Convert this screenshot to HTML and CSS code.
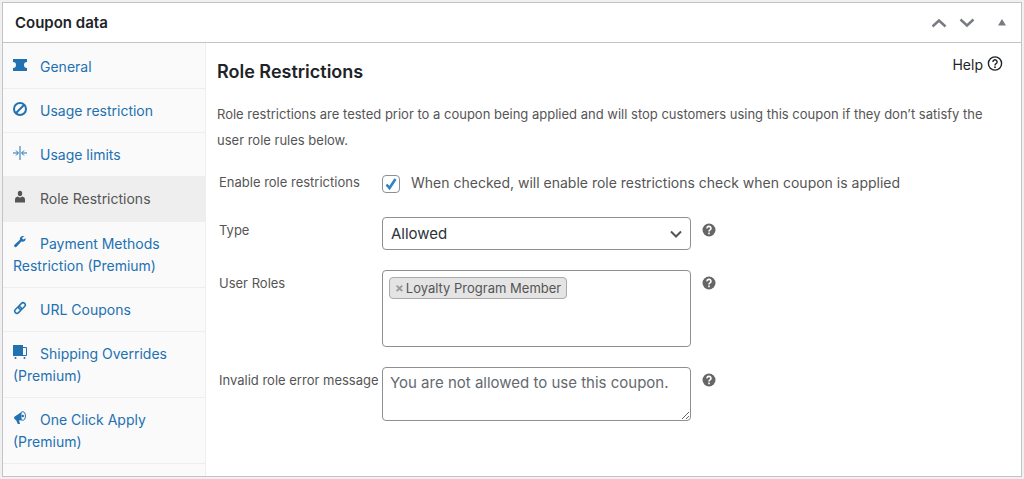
FILE: index.html
```html
<!DOCTYPE html>
<html lang="en">
<head>
    <meta charset="UTF-8">
    <title>Coupon data</title>
    <link rel="stylesheet" href="styles.css">
</head>
<body>
    <div class="postbox">
        <div class="postbox-header">
            <h2>Coupon data</h2>
            <div class="handle-actions">
                <button type="button" aria-label="Move up">
                    <svg width="16" height="16" viewBox="0 0 16 16"><path d="M1.500 11.500l6.500-6 6.500 6" fill="none" stroke="#787c82" stroke-width="2.400"/></svg>
                </button>
                <button type="button" aria-label="Move down">
                    <svg width="16" height="16" viewBox="0 0 16 16"><path d="M1.500 4.500l6.500 6 6.500-6" fill="none" stroke="#787c82" stroke-width="2.400"/></svg>
                </button>
                <button type="button" class="toggle" aria-label="Toggle panel">
                    <svg width="10" height="16" viewBox="0 0 10 16"><path d="M1 10.500L5 4l4 6.500z" fill="#787c82"/></svg>
                </button>
            </div>
        </div>

        <div class="panel-wrap">
            <ul class="tabs">
                <li><a href="#general">
                    <svg viewBox="1 1 14 14"><path d="M1 2h14v3a3 3 0 0 0 0 6v3H1v-3a3 3 0 0 0 0-6z"/></svg>General</a></li>
                <li><a href="#usage-restriction">
                    <svg viewBox="1 1 14 14"><g fill="none" stroke="currentColor" stroke-width="2"><circle cx="8" cy="8" r="6"/><path d="M3.800 12.200l8.400-8.400"/></g></svg>Usage restriction</a></li>
                <li><a href="#usage-limits">
                    <svg viewBox="1 1 14 14"><path d="M8 1v14M1 8h5M4 5.500L6.500 8 4 10.500M15 8h-5M12 5.500L9.500 8l2.500 2.500" fill="none" stroke="currentColor"/></svg>Usage limits</a></li>
                <li class="active"><a href="#role-restrictions">
                    <svg viewBox="1 1 14 14"><ellipse cx="8" cy="4.500" rx="2.200" ry="2.800"/><path d="M3 13.500V10.500Q3 8 5.800 7.500Q8 9.500 10.200 7.500Q13 8 13 10.500V13.500z"/></svg>Role Restrictions</a></li>
                <li><a href="#payment-methods">
                    <svg viewBox="1 1 14 14"><path d="M13.600 4.200l-2.200 1.300-1.200-.8.200-1.300 2-1.200C9.800 1.300 7.400 3 7.900 5.800L2.500 10.700c-1.300 1.300.8 3.400 2.100 2l4.800-5.100c2.800.5 4.700-1.300 4.200-3.400z"/></svg>Payment Methods Restriction (Premium)</a></li>
                <li><a href="#url-coupons">
                    <svg viewBox="1 1 14 14"><g fill="none" stroke="currentColor" stroke-width="1.500" transform="rotate(-45 8 8)"><rect x="1.500" y="5.800" width="7.500" height="4.400" rx="2.200"/><rect x="7" y="5.800" width="7.500" height="4.400" rx="2.200"/></g></svg>URL Coupons</a></li>
                <li><a href="#shipping-overrides">
                    <svg viewBox="1 1 14 14"><path d="M1 1h10v11H1z"/><path d="M11 3.500h3.500v8H11" fill="none" stroke="currentColor"/><circle cx="3.500" cy="14" r="1"/><circle cx="12.500" cy="14" r="1"/></svg>Shipping Overrides (Premium)</a></li>
                <li><a href="#one-click-apply">
                    <svg viewBox="1 1 14 14"><path d="M2 7L9.500 2v8.500L7 10.300l1 3.700H5.800L4.300 10.500Q2 10 2 7z"/><ellipse cx="10.800" cy="6" rx="2.600" ry="4.200" fill="none" stroke="currentColor"/><circle cx="10.800" cy="6" r="1.200"/></svg>One Click Apply (Premium)</a></li>
            </ul>

            <div class="options">
                <div class="options-title">
                    <h3>Role Restrictions</h3>
                    <a href="#help" class="help">Help
                        <svg width="16" height="16" viewBox="0 0 16 16"><circle cx="8" cy="7.500" r="6.600" fill="none" stroke="currentColor" stroke-width="1.400"/><path d="M5.900 5.900a2.100 2.100 0 1 1 3.200 1.800Q8 8.400 8 9.500" fill="none" stroke="currentColor" stroke-width="1.400"/><circle cx="8" cy="11.200" r=".9"/></svg>
                    </a>
                </div>
                <p class="intro">Role restrictions are tested prior to a coupon being applied and will stop customers using this coupon if they don’t satisfy the user role rules below.</p>

                <div class="field field-check">
                    <label for="enable">Enable role restrictions</label>
                    <input type="checkbox" id="enable" aria-describedby="enable-text" checked>
                    <span id="enable-text">When checked, will enable role restrictions check when coupon is applied</span>
                </div>

                <div class="field">
                    <label for="type">Type</label>
                    <select id="type">
                        <option>Allowed</option>
                        <option>Disallowed</option>
                    </select>
                    <svg class="tip" viewBox="0 0 14 14"><circle cx="7" cy="7" r="6.500"/><path d="M5 5.400a2 1.900 0 1 1 3 1.500Q7 7.500 7 8.500"/><path d="M7 9.600v1.600"/></svg>
                </div>

                <div class="field">
                    <label id="roles-label">User Roles</label>
                    <div class="roles" role="group" aria-labelledby="roles-label" tabindex="0">
                        <span class="role"><button type="button" aria-label="Remove">×</button>Loyalty Program Member</span>
                    </div>
                    <svg class="tip" viewBox="0 0 14 14"><circle cx="7" cy="7" r="6.500"/><path d="M5 5.400a2 1.900 0 1 1 3 1.500Q7 7.500 7 8.500"/><path d="M7 9.600v1.600"/></svg>
                </div>

                <div class="field">
                    <label for="message">Invalid role error message</label>
                    <textarea id="message" placeholder="You are not allowed to use this coupon."></textarea>
                    <svg class="tip" viewBox="0 0 14 14"><circle cx="7" cy="7" r="6.500"/><path d="M5 5.400a2 1.900 0 1 1 3 1.500Q7 7.500 7 8.500"/><path d="M7 9.600v1.600"/></svg>
                </div>
            </div>
        </div>
    </div>
</body>
</html>
```
FILE: styles.css
```css
* {
    box-sizing: border-box;
}

body {
    font-family: Inter, "Liberation Sans", sans-serif;
    font-size: 13px;
    margin: 2px;
    background-color: #f0f0f1;
    color: #555;
}

.postbox {
    background-color: #fff;
    border: 1px solid #c3c4c7;
}

.postbox-header {
    display: flex;
    align-items: center;
    justify-content: space-between;
    height: 40px;
    padding: 0 14px 0 12px;
    border-bottom: 1px solid #c3c4c7;
}

h2 {
    margin: 0;
    font-size: 15px;
    font-weight: 600;
    color: #1d2327;
}

.handle-actions {
    display: flex;
    gap: 12px;
}

.handle-actions button {
    display: flex;
    padding: 0;
    border: 0;
    background: none;
    cursor: pointer;
}

.handle-actions .toggle {
    margin-left: 10px;
}

/* sidebar tabs */
.panel-wrap {
    display: flex;
    min-height: 433px;
}

.tabs {
    flex: none;
    width: 203px;
    margin: 0;
    padding: 2px 0 0;
    list-style: none;
    background-color: #fafafa;
    border-right: 1px solid #eee;
}

.tabs a {
    display: block;
    padding: 11px 10px 10px;
    border-bottom: 1px solid #eee;
    font-size: 14px;
    line-height: 22px;
    color: #2271b1;
    text-decoration: none;
}

.tabs svg {
    width: 14px;
    height: 14px;
    margin-right: 13px;
    fill: currentColor;
}

.tabs .active a {
    padding-bottom: 11px;
    background-color: #eee;
    color: #555;
}

/* options */
.options {
    flex: 1;
    padding: 12px 18px 32px 11px;
}

.options-title {
    display: flex;
    justify-content: space-between;
}

h3 {
    margin: 6px 0 0;
    font-size: 18px;
    font-weight: 600;
    line-height: 22px;
    color: #1d2327;
}

.help {
    display: flex;
    align-items: center;
    gap: 4px;
    height: 18px;
    font-size: 14px;
    color: #1d2327;
    text-decoration: none;
}

.help svg {
    fill: currentColor;
}

.intro {
    margin: 18px 0 17px;
    line-height: 26px;
}

.field {
    display: flex;
    align-items: flex-start;
    margin-bottom: 20px;
    padding-left: 2px;
}

.field label {
    flex: none;
    width: 163px;
    line-height: 26px;
    white-space: nowrap;
}

.field-check {
    height: 27px;
    font-size: 14px;
    line-height: 26px;
}

.field-check label {
    font-size: 13px;
    line-height: 24px;
}

input[type="checkbox"] {
    appearance: none;
    width: 18px;
    height: 18px;
    margin: 5px 11px 0 0;
    border: 1px solid #8c8f94;
    border-radius: 4px;
    background: #fff url("data:image/svg+xml,%3Csvg xmlns='http://www.w3.org/2000/svg' viewBox='0 0 16 16'%3E%3Cpath d='M3.500 8.500l3 3.500 6-9' fill='none' stroke='%233582c4' stroke-width='2.600'/%3E%3C/svg%3E");
}

select,
.roles,
textarea {
    width: 309px;
    margin: 0;
    border: 1px solid #8c8f94;
    border-radius: 4px;
    background-color: #fff;
    font-family: inherit;
    font-size: 15px;
}

select {
    appearance: none;
    height: 33px;
    padding: 0 8px;
    color: #2c3338;
    background: #fff url("data:image/svg+xml,%3Csvg xmlns='http://www.w3.org/2000/svg' viewBox='0 0 16 16'%3E%3Cpath d='M3 5.500l5 5 5-5' fill='none' stroke='%23555' stroke-width='2'/%3E%3C/svg%3E") no-repeat right 6px center / 16px;
}

.roles {
    height: 77px;
    padding: 6px;
}

.role {
    display: inline-flex;
    align-items: center;
    height: 22px;
    padding: 0 5px;
    border: 1px solid #aaa;
    border-radius: 4px;
    background-color: #e4e4e4;
    font-size: 13px;
}

.role button {
    padding: 0;
    margin-right: 2px;
    border: 0;
    background: none;
    font: bold 13px Inter, sans-serif;
    color: #999;
}

textarea {
    height: 54px;
    padding: 5px 7px;
    line-height: 20px;
}

textarea::placeholder {
    color: #646970;
}

.tip {
    width: 14px;
    height: 14px;
    margin: 6px 0 0 11px;
    fill: #666;
}

.tip path {
    fill: none;
    stroke: #fff;
    stroke-width: 1.600;
}
```
